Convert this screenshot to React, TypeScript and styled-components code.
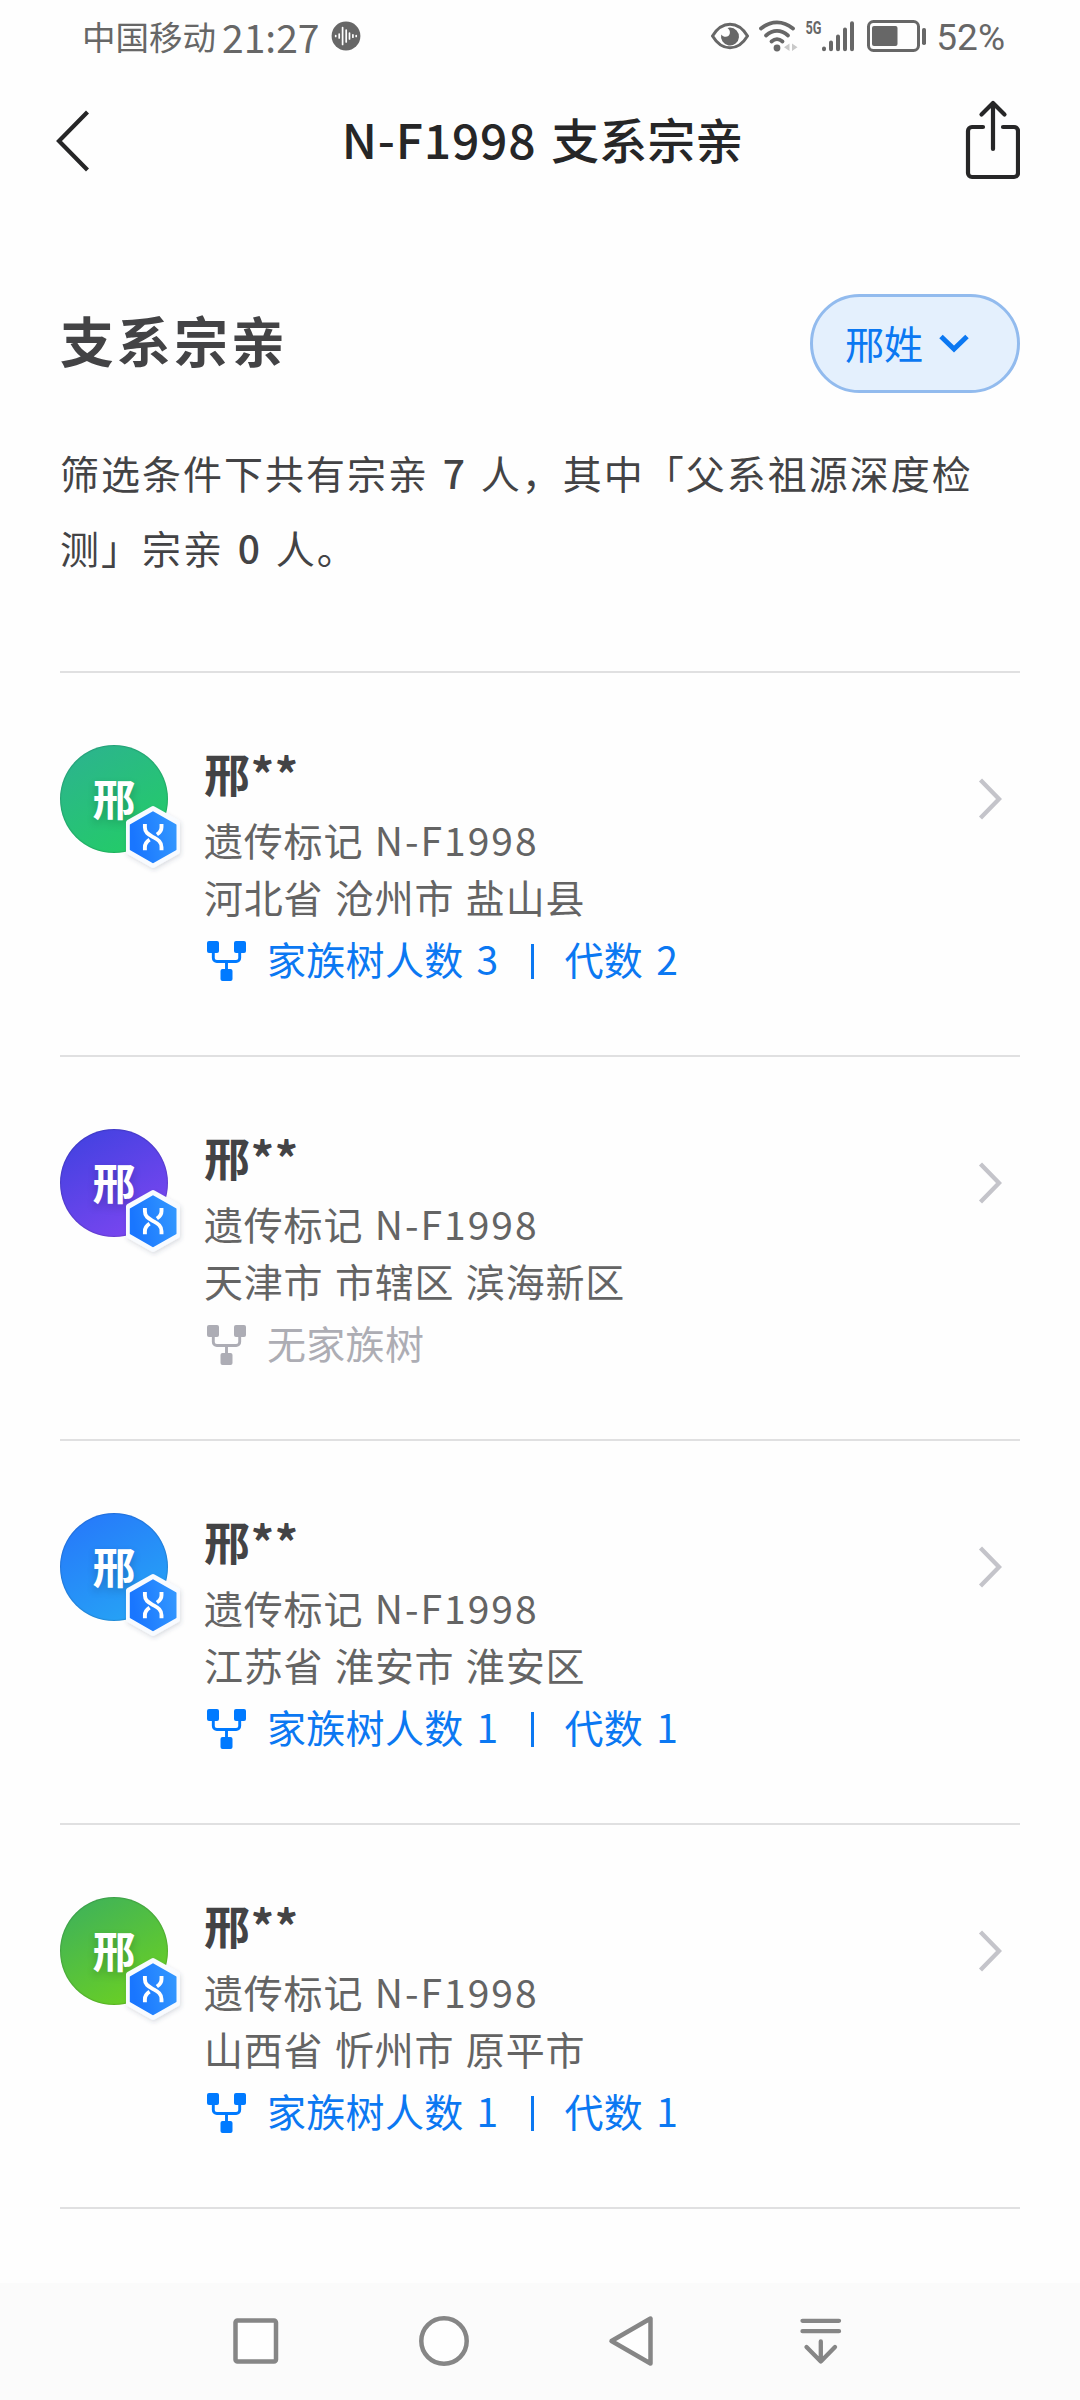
import React from "react";
import styled, { createGlobalStyle } from "styled-components";

const GlobalStyle = createGlobalStyle`
  * { box-sizing: border-box; }
  body {
    margin: 0;
    background: #fefefe;
    font-family: "Noto Sans CJK SC", "Noto Sans", sans-serif;
  }
  svg { display: block; flex: none; }
`;

const Screen = styled.div`
  width: 1080px;
  height: 2400px;
  display: flex;
  flex-direction: column;
  background: #fefefe;
  overflow: hidden;
`;

const StatusBar = styled.header`
  height: 72px;
  flex: none;
  display: flex;
  align-items: center;
  justify-content: space-between;
  padding: 0 75px 0 82px;
  color: #676767;
  line-height: 72px;
`;

const StatusGroup = styled.div`
  display: flex;
  align-items: center;
  height: 72px;
`;

const Carrier = styled.span`
  font-size: 33.5px;
  margin-top: -1px;
`;

const Clock = styled.span`
  font-size: 39px;
  margin: 0 12px 0 6px;
`;

const WifiSlot = styled.span`
  margin: 0 6px 0 10px;
`;

const BatterySlot = styled.span`
  margin: 0 9px 0 12px;
`;

const Percent = styled.span`
  font-family: Roboto, "Noto Sans", sans-serif;
  font-size: 37px;
  margin-top: 4px;
`;

const TitleBar = styled.nav`
  height: 138px;
  flex: none;
  display: grid;
  grid-template-columns: 1fr auto 1fr;
  align-items: center;
  padding: 0 60px 0 53px;
  color: #262627;
`;

const PageTitle = styled.h1`
  margin: -7px 0 0 12px;
  font-size: 48px;
  font-weight: 500;
  line-height: 72px;
  word-spacing: 4px;
`;

const Latin = styled.span<{ $spacing: number }>`
  letter-spacing: ${(p) => p.$spacing}px;
`;

const IconButton = styled.button<{ $end?: boolean }>`
  display: flex;
  justify-self: ${(p) => (p.$end ? "end" : "start")};
  padding: 0;
  border: 0;
  background: none;
  color: inherit;
`;

const Content = styled.main`
  flex: 1;
  padding: 84px 60px 0;
`;

const SectionHead = styled.div`
  height: 99px;
  display: flex;
  align-items: center;
  justify-content: space-between;
`;

const SectionTitle = styled.h2`
  margin: -7px 0 0;
  font-size: 54px;
  font-weight: 700;
  letter-spacing: 3px;
  line-height: 80px;
  color: #434345;
`;

const FilterPill = styled.button`
  width: 210px;
  height: 99px;
  display: flex;
  align-items: center;
  gap: 16px;
  padding: 0 0 0 32px;
  border: 3px solid #92bbee;
  border-radius: 50px;
  background: #e4f0fd;
  color: #0b78f2;
  font-family: inherit;
  font-size: 39px;
  line-height: 60px;
`;

const FilterLabel = styled.span`
  padding-bottom: 4px;
`;

const Summary = styled.p`
  margin: 42px 0 86px;
  font-size: 39px;
  line-height: 75px;
  letter-spacing: 2px;
  word-spacing: 3px;
  color: #434345;
  white-space: nowrap;

  b { font-weight: 500; }
`;

const List = styled.ul`
  margin: 0;
  padding: 0;
  list-style: none;
  border-top: 2px solid #e0e0e1;
`;

const Row = styled.li`
  height: 384px;
  display: flex;
  align-items: flex-start;
  padding-top: 72px;
  border-bottom: 2px solid #e0e0e1;
`;

const Avatar = styled.div<{ $from: string; $to: string }>`
  position: relative;
  flex: none;
  width: 108px;
  height: 108px;
  border-radius: 50%;
  background: linear-gradient(150deg, ${(p) => p.$from} 15%, ${(p) => p.$to} 90%);
  box-shadow: inset 0 0 1px 1px rgba(0, 0, 0, 0.13);
  color: #fff;
  font-size: 43px;
  font-weight: 700;
  line-height: 104px;
  text-align: center;
  text-shadow: 0 4px 8px rgba(0, 0, 0, 0.2);
`;

const Badge = styled.svg`
  position: absolute;
  left: 58px;
  top: 54px;
`;

const Details = styled.div`
  flex: 1;
  display: flex;
  flex-direction: column;
  margin-left: 36px;
`;

const Name = styled.div`
  height: 66px;
  font-size: 46px;
  font-weight: 700;
  line-height: 54px;
  letter-spacing: 0.7px;
  color: #434345;
`;

const Line = styled.div`
  height: 57px;
  font-size: 39px;
  line-height: 57px;
  letter-spacing: 0.8px;
  word-spacing: 2px;
  color: #646464;
  white-space: pre;
`;

const TreeLine = styled.div<{ $active: boolean }>`
  height: 66px;
  display: flex;
  align-items: center;
  gap: 21px;
  padding-left: 3px;
  font-size: 39px;
  line-height: 66px;
  white-space: pre;
  color: ${(p) => (p.$active ? "#0b78f2" : "#adadb4")};

  svg {
    margin-top: 6px;
    color: ${(p) => (p.$active ? "#007aff" : "#adadb5")};
  }
`;

const TreeStat = styled.span`
  display: flex;
  align-items: center;
  letter-spacing: 0.3px;
  word-spacing: 4px;
`;

const Separator = styled.i`
  width: 3px;
  height: 35px;
  margin: 6px 31px 0 32px;
  background: currentColor;
`;

const Chevron = styled.svg`
  margin: 32px 17px 0 0;
`;

const NavBar = styled.footer`
  height: 117px;
  flex: none;
  display: grid;
  grid-template-columns: repeat(4, 188.5px);
  justify-content: center;
  justify-items: center;
  align-items: center;
  padding: 0 3px 2px 0;
  background: #fbfbfb;
  color: #868686;
`;

const VoiceIcon = () => (
  <svg width="30" height="30" viewBox="0 0 30 30">
    <circle cx="15" cy="15" r="14.4" fill="currentColor" />
    <path d="M4.7 14.5v1M8.2 13v4M11.6 6.5v17M15.2 9v12M18.5 12v6M21.9 13.8v2.4M25.2 14.5v1" stroke="#fff" strokeWidth="1.7" strokeLinecap="round" />
  </svg>
);

const EyeIcon = () => (
  <svg width="38" height="28" viewBox="0 0 38 28">
    <path d="M1.5 14C6 6.5 12 2.2 19 2.2S32 6.5 36.5 14C32 21.5 26 25.8 19 25.8S6 21.5 1.5 14Z" fill="none" stroke="currentColor" strokeWidth="3" />
    <path d="M19 5.5A9 9 0 1 1 10.200 12.500C12.500 15.500 17.800 16 18.800 11.500C19.400 9.200 18 7 16.500 6Z" fill="currentColor" />
  </svg>
);

const WifiIcon = () => (
  <svg width="40" height="34" viewBox="0 0 40 34">
    <g fill="none" stroke="currentColor" strokeWidth="3.8" strokeLinecap="round">
      <path d="M2 9.500C12 1.200 24 1.200 34 9.500" />
      <path d="M7 16.500C14 10.500 22 10.500 29 16.500" />
      <path d="M12.500 22.500C16 19.500 20 19.500 23.500 22.500" />
    </g>
    <circle cx="18" cy="29" r="3.4" fill="currentColor" />
    <path d="M30.500 24.500v7.500l-5.500-3.700zM33 24.500v7.500l5.500-3.700z" fill="#c9c9c9" />
  </svg>
);

const SignalIcon = () => (
  <svg width="50" height="36" viewBox="0 0 50 36">
    <text x="0.5" y="15.500" fontFamily="Roboto, sans-serif" fontSize="18.5" fontWeight="700" textLength="16" lengthAdjust="spacingAndGlyphs" fill="currentColor">5G</text>
    <path d="M19 30.500v0.800M26 24.500v6.800M33 18.500v12.800M40 11.500v19.800M47 5.200v26.100" stroke="currentColor" strokeWidth="4" strokeLinecap="round" />
  </svg>
);

const BatteryIcon = () => (
  <svg width="60" height="32" viewBox="0 0 60 32">
    <rect x="1.500" y="1.500" width="50" height="29" rx="5" fill="none" stroke="currentColor" strokeWidth="3" />
    <rect x="5" y="6" width="25.500" height="20" rx="2" fill="currentColor" />
    <rect x="55" y="8" width="4" height="17" rx="1.800" fill="currentColor" />
  </svg>
);

const BackIcon = () => (
  <svg width="40" height="64" viewBox="0 0 40 64" fill="none" stroke="currentColor" strokeWidth="4.2">
    <path d="M34.500 3L6 32l28.500 29" />
  </svg>
);

const ShareIcon = () => (
  <svg width="56" height="84" viewBox="2 0 56 84" fill="none" stroke="currentColor" strokeWidth="4.2" strokeLinecap="round" strokeLinejoin="round">
    <path d="M21 28H10a4 4 0 0 0-4 4v42a4 4 0 0 0 4 4h42a4 4 0 0 0 4-4V32a4 4 0 0 0-4-4h-11" />
    <path d="M31 50V4M19.500 15.500L31 4l11.500 11.500" />
  </svg>
);

const DownIcon = () => (
  <svg width="30" height="20" viewBox="0 0 30 20" fill="none" stroke="currentColor" strokeWidth="5">
    <path d="M2 2.500l13 12.500L28 2.500" />
  </svg>
);

const TreeIcon = () => (
  <svg width="39" height="40" viewBox="0 0 39 40">
    <g fill="currentColor">
      <rect x="0" y="0" width="12" height="12" rx="2" />
      <rect x="27" y="0" width="12" height="12" rx="2" />
      <rect x="13.500" y="28" width="12" height="12" rx="2" />
    </g>
    <path d="M6.300 11v6a3.500 3.500 0 0 0 3.500 3.500h19.400a3.500 3.500 0 0 0 3.500-3.500v-6M19.500 20.500V29" fill="none" stroke="currentColor" strokeWidth="2.900" />
  </svg>
);

const GeneBadge = ({ id }: { id: string }) => (
  <Badge width="72" height="78" viewBox="0 0 72 78">
    <defs>
      <linearGradient id={id} x1="0" y1="0.2" x2="1" y2="0">
        <stop offset="0" stopColor="#1976ff" />
        <stop offset="1" stopColor="#3499ff" />
      </linearGradient>
      <filter id={id + "s"} x="-30%" y="-30%" width="160%" height="160%">
        <feDropShadow dx="1" dy="2" stdDeviation="2" floodColor="#3c4664" floodOpacity="0.18" />
      </filter>
    </defs>
    <path d="M35 10L59 23.500v29L35 66L11 52.500V23.500Z" fill="#f8fbff" stroke="#f8fbff" strokeWidth="6" strokeLinejoin="round" filter={`url(#${id}s)`} />
    <path d="M35 13.300L57.500 26v24.500L35 63.200L12.800 50.500V26Z" fill={`url(#${id})`} stroke={`url(#${id})`} strokeWidth="2" strokeLinejoin="round" />
    <g fill="none" stroke="#fff" strokeWidth="3.9">
      <path d="M26.900 25v3.200c0 5.800 4 7.400 8.300 9.900s8.300 4.300 8.300 10.100v3" />
      <path d="M43.500 25v3.200c0 3.600-1.900 5.500-4.600 7.300M26.900 51.200v-3c0-3.700 2-5.700 4.700-7.500" />
    </g>
  </Badge>
);

const SquareIcon = () => (
  <svg width="52" height="52" viewBox="0 0 52 52" fill="#fefefe" stroke="currentColor" strokeWidth="4.5">
    <rect x="5.500" y="5.500" width="40.500" height="41" rx="2" />
  </svg>
);

const CircleIcon = () => (
  <svg width="52" height="52" viewBox="0 0 52 52" fill="#fefefe" stroke="currentColor" strokeWidth="4.5">
    <circle cx="26" cy="26" r="22.700" />
  </svg>
);

const TriangleIcon = () => (
  <svg width="52" height="52" viewBox="0 0 52 52" fill="#fefefe" stroke="currentColor" strokeWidth="4.5" strokeLinejoin="round">
    <path d="M43.500 3.500v45L4.500 26Z" />
  </svg>
);

const PullDownIcon = () => (
  <svg width="52" height="52" viewBox="0 0 52 52" fill="none" stroke="currentColor" strokeWidth="4.3" strokeLinecap="round" strokeLinejoin="round">
    <path d="M7.500 5.800h36.500M7.500 16.200h36.500" />
    <path d="M25.800 26.500v20M11.500 32l14.300 14.500L40 32" />
  </svg>
);

type Member = {
  region: string;
  from: string;
  to: string;
  people?: number;
  generations?: number;
};

const members: Member[] = [
  { region: "河北省 沧州市 盐山县", from: "#2bb68a", to: "#23cc67", people: 3, generations: 2 },
  { region: "天津市 市辖区 滨海新区", from: "#4842e2", to: "#7b46f0" },
  { region: "江苏省 淮安市 淮安区", from: "#267dfa", to: "#26a4f5", people: 1, generations: 1 },
  { region: "山西省 忻州市 原平市", from: "#43b554", to: "#6bd022", people: 1, generations: 1 },
];

const MemberRow = ({ member, index }: { member: Member; index: number }) => {
  const hasTree = member.people !== undefined;
  return (
    <Row>
      <Avatar $from={member.from} $to={member.to}>
        邢
        <GeneBadge id={`gene${index}`} />
      </Avatar>
      <Details>
        <Name>邢**</Name>
        <Line>遗传标记 <Latin $spacing={2}>N-F1998</Latin></Line>
        <Line>{member.region}</Line>
        <TreeLine $active={hasTree}>
          <TreeIcon />
          {hasTree ? (
            <TreeStat>
              家族树人数 {member.people}
              <Separator />
              代数 {member.generations}
            </TreeStat>
          ) : (
            <TreeStat>无家族树</TreeStat>
          )}
        </TreeLine>
      </Details>
      <Chevron width="26" height="44" viewBox="0 0 26 44" fill="none" stroke="#c4c4ca" strokeWidth="4.3">
        <path d="M3.500 3l18.500 19L3.500 41" />
      </Chevron>
    </Row>
  );
};

export default function App() {
  return (
    <>
      <GlobalStyle />
      <Screen>
        <StatusBar>
          <StatusGroup>
            <Carrier>中国移动</Carrier>
            <Clock>21:27</Clock>
            <VoiceIcon />
          </StatusGroup>
          <StatusGroup>
            <EyeIcon />
            <WifiSlot><WifiIcon /></WifiSlot>
            <SignalIcon />
            <BatterySlot><BatteryIcon /></BatterySlot>
            <Percent>52%</Percent>
          </StatusGroup>
        </StatusBar>
        <TitleBar>
          <IconButton aria-label="返回"><BackIcon /></IconButton>
          <PageTitle><Latin $spacing={0.8}>N-F1998</Latin> 支系宗亲</PageTitle>
          <IconButton $end aria-label="分享"><ShareIcon /></IconButton>
        </TitleBar>
        <Content>
          <SectionHead>
            <SectionTitle>支系宗亲</SectionTitle>
            <FilterPill><FilterLabel>邢姓</FilterLabel><DownIcon /></FilterPill>
          </SectionHead>
          <Summary>
            筛选条件下共有宗亲 <b>7</b> 人，其中「父系祖源深度检<br />
            测」宗亲 <b>0</b> 人。
          </Summary>
          <List>
            {members.map((member, i) => (
              <MemberRow key={member.region} member={member} index={i} />
            ))}
          </List>
        </Content>
        <NavBar>
          <SquareIcon />
          <CircleIcon />
          <TriangleIcon />
          <PullDownIcon />
        </NavBar>
      </Screen>
    </>
  );
}
